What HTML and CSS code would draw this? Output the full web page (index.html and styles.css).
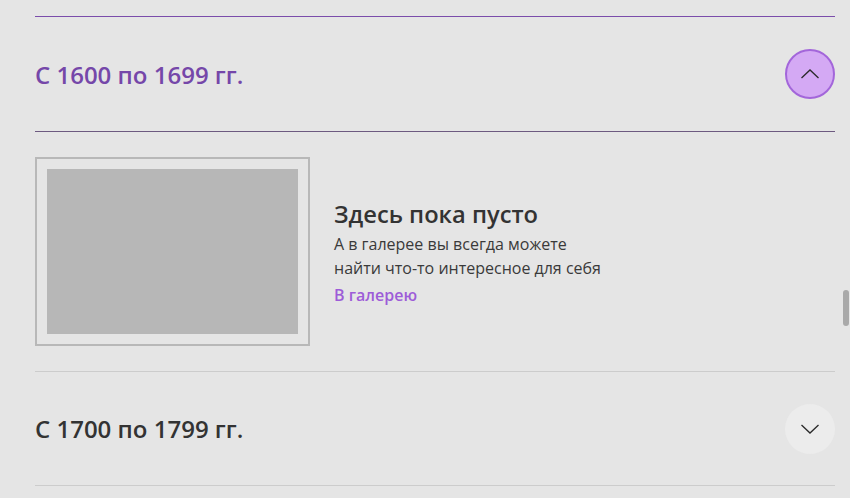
FILE: index.html
```html
<!DOCTYPE html>
<html lang="ru">
<head>
<meta charset="utf-8">
<link rel="stylesheet" href="styles.css">
</head>
<body>
<div class="page">
  <section class="acc acc-open">
    <div class="acc-head">
      <h2 class="acc-title">С 1600 по 1699 гг.</h2>
      <button class="toggle toggle-open" aria-label="Свернуть">
        <svg width="20" height="12" viewBox="0 0 20 12"><path d="M1.5 10 L10 2 L18.5 10" fill="none" stroke="#2a2a2a" stroke-width="1.3"/></svg>
      </button>
    </div>
    <div class="acc-body">
      <div class="frame"><div class="placeholder"></div></div>
      <div class="empty">
        <h3 class="empty-title">Здесь пока пусто</h3>
        <p class="empty-text">А в галерее вы всегда можете<br>найти что-то интересное для себя</p>
        <a class="empty-link" href="#">В галерею</a>
      </div>
    </div>
  </section>
  <section class="acc acc-last">
    <div class="acc-head">
      <h2 class="acc-title">С 1700 по 1799 гг.</h2>
      <button class="toggle" aria-label="Развернуть">
        <svg width="20" height="12" viewBox="0 0 20 12"><path d="M1.5 2 L10 10 L18.5 2" fill="none" stroke="#2a2a2a" stroke-width="1.3"/></svg>
      </button>
    </div>
  </section>
</div>
<div class="scrollbar"></div>
</body>
</html>
```

FILE: styles.css
```css
html, body {
  margin: 0;
  padding: 0;
  background: #e5e5e5;
  height: 100%;
  overflow: hidden;
}
body {
  font-family: "Open Sans", "Noto Sans", sans-serif;
  color: #333;
}
.page {
  width: 800px;
  margin-left: 35px;
  padding-top: 16px;
}
.acc {
  border-top: 1px solid #cccccc;
}
.acc-open {
  border-top-color: #7b4dab;
}
.acc-last {
  border-bottom: 1px solid #cccccc;
}
.acc-head {
  height: 114px;
  display: flex;
  align-items: center;
  justify-content: space-between;
}
.acc-last .acc-head {
  height: 113px;
}
.acc-open .acc-head {
  border-bottom: 1px solid #6d5a80;
}
.acc-title {
  margin: 0;
  font-size: 24px;
  font-weight: 600;
  color: #333;
}
.acc-open .acc-title {
  color: #7547a9;
}
.toggle {
  width: 50px;
  height: 50px;
  border-radius: 50%;
  border: none;
  background: #ececec;
  display: flex;
  align-items: center;
  justify-content: center;
  padding: 0;
}
.toggle-open {
  background: #d4a9f4;
  border: 2px solid #a366da;
}
.acc-body {
  display: flex;
  align-items: center;
  padding: 25px 0;
}
.frame {
  width: 251px;
  height: 165px;
  padding: 10px;
  border: 2px solid #b8b8b8;
}
.placeholder {
  width: 100%;
  height: 100%;
  background: #b7b7b7;
}
.empty {
  margin-left: 24px;
  margin-top: 2px;
}
.empty-title {
  margin: 0;
  font-size: 23.7px;
  font-weight: 600;
  color: #333;
  line-height: 32px;
}
.empty-text {
  margin: 2px 0 0;
  font-size: 16px;
  line-height: 24px;
  color: #3a3a3a;
}
.empty-link {
  display: block;
  margin-top: 3px;
  font-size: 16px;
  font-weight: 600;
  color: #9d5cd8;
  text-decoration: none;
  line-height: 24px;
}
.scrollbar {
  position: fixed;
  right: 1px;
  top: 290px;
  width: 6px;
  height: 36px;
  border-radius: 3px;
  background: #a9a9a9;
}
```
